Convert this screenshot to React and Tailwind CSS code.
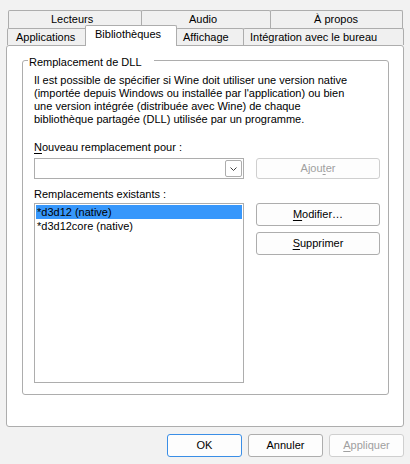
import React from 'react'

// petit soulignement pour les raccourcis clavier (&Nouveau, &Modifier...)
function Mn({ children }) {
  return <u className="underline underline-offset-[2px] decoration-1">{children}</u>
}

function Bouton({ children, className = '', disabled, defaut }) {
  const bord = defaut
    ? 'border-[#3a8ee6]'
    : disabled
      ? 'border-[#cfcfcf]'
      : 'border-[#adadad]'
  return (
    <div
      className={`flex items-center justify-center border ${bord} rounded-[3px] bg-[#fdfdfd] ${disabled ? 'text-[#a0a0a0]' : 'text-black'} ${className}`}
    >
      {children}
    </div>
  )
}

export default function App() {
  const ongletHaut = 'flex items-center h-[18px] border border-b-0 border-[#adadad] rounded-t-[2px] bg-[#f0f0f0]'
  const ongletBas = 'flex items-center h-[17px] border border-b-0 border-[#adadad] rounded-t-[2px] bg-[#f0f0f0]'

  return (
    <div className="w-[410px] h-[464px] bg-[#f2f2f2] text-black text-[11px] leading-[13px] font-['Liberation_Sans',Arial,sans-serif] pt-[10px] overflow-hidden select-none">
      {/* onglets - rangée arrière */}
      <div className="flex ml-[8px]">
        <div className={`${ongletHaut} w-[134px] pl-[42px]`}>Lecteurs</div>
        <div className={`${ongletHaut} w-[130px] -ml-px pl-[47px]`}>Audio</div>
        <div className={`${ongletHaut} w-[133px] -ml-px pl-[43px]`}>À propos</div>
      </div>

      {/* onglets - rangée avant */}
      <div className="flex items-end h-[17px] ml-[7px] relative z-10">
        <div className={`${ongletBas} w-[80px] pl-[8px]`}>Applications</div>
        <div className="relative z-10 flex items-center h-[21px] mb-[-1px] w-[92px] -ml-[2px] pl-[9px] pb-[3px] border border-b-0 border-[#adadad] rounded-t-[2px] bg-white">
          Bibliothèques
        </div>
        <div className={`${ongletBas} w-[68px] -ml-px pl-[6px]`}>Affichage</div>
        <div className={`${ongletBas} w-[161px] -ml-px pl-[6px]`}>Intégration avec le bureau</div>
      </div>

      {/* page Bibliothèques */}
      <div className="ml-[6px] w-[398px] h-[382px] bg-white border border-[#adadad] rounded-[3px] pt-[6px]">
        <fieldset className="ml-[15px] w-[367px] border border-[#adadad] rounded-[3px] pb-[11px]">
          <legend className="ml-[5px] pl-px pr-[12px] pt-[4px] leading-[13px]">Remplacement de DLL</legend>

          <div className="pl-[11px]">
            <p className="mt-[5px] whitespace-nowrap">
              Il est possible de spécifier si Wine doit utiliser une version native
              <br />
              (importée depuis Windows ou installée par l'application) ou bien
              <br />
              une version intégrée (distribuée avec Wine) de chaque
              <br />
              bibliothèque partagée (DLL) utilisée par un programme.
            </p>

            <div className="mt-[15px]">
              <Mn>N</Mn>ouveau remplacement pour :
            </div>

            <div className="flex gap-[12px] mt-[4px]">
              <div className="flex items-center justify-end w-[210px] h-[21px] border border-[#adadad] bg-white pr-[1px]">
                <div className="flex items-center justify-center w-[17px] h-[17px] border border-[#adadad] rounded-[2px] bg-white">
                  <svg width="7" height="4" viewBox="0 0 7 4" fill="none">
                    <path d="M0.5 0.5 L3.5 3.5 L6.5 0.5" stroke="#404040" strokeWidth="1" />
                  </svg>
                </div>
              </div>
              <Bouton className="w-[124px] h-[21px]" disabled>
                Ajou<Mn>t</Mn>er
              </Bouton>
            </div>

            <div className="mt-[9px]">Remplacements existants :</div>

            <div className="flex gap-[12px] mt-[2px]">
              <div className="w-[210px] h-[180px] border border-[#adadad] bg-white p-px">
                <div className="h-[14px] bg-[#3797fb] pl-[1px] flex items-center">*d3d12 (native)</div>
                <div className="h-[14px] pl-[1px] flex items-center">*d3d12core (native)</div>
              </div>
              <div className="flex flex-col gap-[6px]">
                <Bouton className="w-[124px] h-[23px]">
                  <Mn>M</Mn>odifier…
                </Bouton>
                <Bouton className="w-[124px] h-[23px]">
                  <Mn>S</Mn>upprimer
                </Bouton>
              </div>
            </div>
          </div>
        </fieldset>
      </div>

      {/* boutons du dialogue */}
      <div className="flex justify-end gap-[6px] pr-[6px] mt-[7px]">
        <Bouton className="w-[75px] h-[23px]" defaut>OK</Bouton>
        <Bouton className="w-[75px] h-[23px]">Annuler</Bouton>
        <Bouton className="w-[75px] h-[23px]" disabled>
          <Mn>A</Mn>ppliquer
        </Bouton>
      </div>
    </div>
  )
}
